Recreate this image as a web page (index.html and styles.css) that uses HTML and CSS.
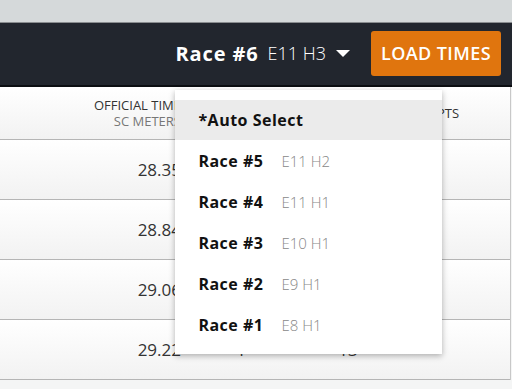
FILE: index.html
```html
<!DOCTYPE html>
<html lang="en">
<head>
    <meta charset="UTF-8">
    <meta name="viewport" content="width=device-width, initial-scale=1.0">
    <title>Race Results</title>
    <link rel="stylesheet" href="styles.css">
</head>
<body>
    <div class="topbar"></div>

    <header class="toolbar">
        <div class="race-picker">
            <button class="race-toggle" type="button">
                <b>Race #6</b>
                <span class="race-event">E11 H3</span>
                <svg class="caret" width="14" height="7" viewBox="0 0 14 7"><path d="M0 0h14L7 7z" fill="#fff"/></svg>
            </button>

            <ul class="race-menu">
                <li class="active"><b>*Auto Select</b></li>
                <li><b>Race #5</b><span class="race-event">E11 H2</span></li>
                <li><b>Race #4</b><span class="race-event">E11 H1</span></li>
                <li><b>Race #3</b><span class="race-event">E10 H1</span></li>
                <li><b>Race #2</b><span class="race-event">E9 H1</span></li>
                <li><b>Race #1</b><span class="race-event">E8 H1</span></li>
            </ul>
        </div>
        <button class="load-btn" type="button">LOAD TIMES</button>
    </header>

    <main class="results">
        <div class="row head">
            <div class="cell time">OFFICIAL TIME<small>SC METERS</small></div>
            <div class="cell"></div>
            <div class="cell"></div>
            <div class="cell">PTS</div>
        </div>
        <div class="row">
            <div class="cell time">28.35</div>
        </div>
        <div class="row">
            <div class="cell time">28.84</div>
        </div>
        <div class="row">
            <div class="cell time">29.06</div>
        </div>
        <div class="row">
            <div class="cell time">29.22</div>
            <div class="cell">1</div>
            <div class="cell">13</div>
            <div class="cell"></div>
        </div>
    </main>
</body>
</html>
```

FILE: styles.css
```css
* {
    box-sizing: border-box;
    margin: 0;
    padding: 0;
}

body {
    font-family: 'Open Sans', 'DejaVu Sans', sans-serif;
    background: #f4f5f5;
    color: #333;
    overflow: hidden;
}

.topbar {
    height: 23px;
    background: #d5d9da;
    border-bottom: 1px solid #8a8d90;
}

.toolbar {
    height: 64px;
    background: #22262e;
    border-bottom: 2px solid #0c0e12;
    display: flex;
    justify-content: flex-end;
    align-items: stretch;
    padding-right: 11px;
}

.race-picker {
    position: relative;
    display: flex;
    align-items: center;
    margin-right: 21px;
}

.race-toggle {
    display: flex;
    align-items: center;
    background: none;
    border: none;
    color: #fff;
    font-family: inherit;
    font-size: 18px;
    cursor: pointer;
    padding-bottom: 2px;
}

.race-toggle b {
    font-size: 20px;
    font-weight: 700;
    letter-spacing: 0.9px;
}

.race-toggle .race-event {
    font-weight: 300;
    margin-left: 9px;
}

.caret {
    margin-left: 10px;
    margin-top: 1px;
}

.race-menu {
    position: absolute;
    top: calc(100% + 5px);
    left: 0;
    width: 267px;
    list-style: none;
    background: #fff;
    padding: 10px 0 9px;
    box-shadow: 0 2px 6px rgba(0, 0, 0, 0.3);
    z-index: 10;
}

.race-menu li {
    height: 41px;
    display: flex;
    align-items: center;
    padding-left: 23px;
    font-size: 15px;
    color: #111;
}

.race-menu li b {
    display: inline-block;
    min-width: 61px;
    font-size: 16px;
    letter-spacing: 0.5px;
}

.race-menu li.active {
    height: 40px;
    background: #ebebeb;
}

.race-menu .race-event {
    font-weight: 300;
    color: #888;
    margin-left: 18px;
}

.load-btn {
    align-self: center;
    width: 130px;
    height: 45px;
    background: #e0750e;
    color: #fff;
    border: none;
    border-radius: 3px;
    font-family: inherit;
    font-size: 18px;
    font-weight: 600;
    letter-spacing: 0.4px;
    cursor: pointer;
    margin-bottom: 2px;
}

.results {
    width: 511px;
    border-right: 1px solid #c8c8c8;
}

.row {
    display: grid;
    grid-template-columns: 191px 100px 114px 86px 1fr;
    height: 60px;
    align-items: center;
    background: linear-gradient(#fff, #f2f2f2);
    border-bottom: 1px solid #b5b5b5;
    font-size: 17px;
}

.row.head {
    height: 53px;
    font-size: 13px;
    line-height: 16px;
    color: #333;
}

.cell {
    text-align: center;
}

.cell.time {
    text-align: right;
    padding-right: 10px;
}

.row.head small {
    display: block;
    font-size: 13px;
    color: #777;
}
```
